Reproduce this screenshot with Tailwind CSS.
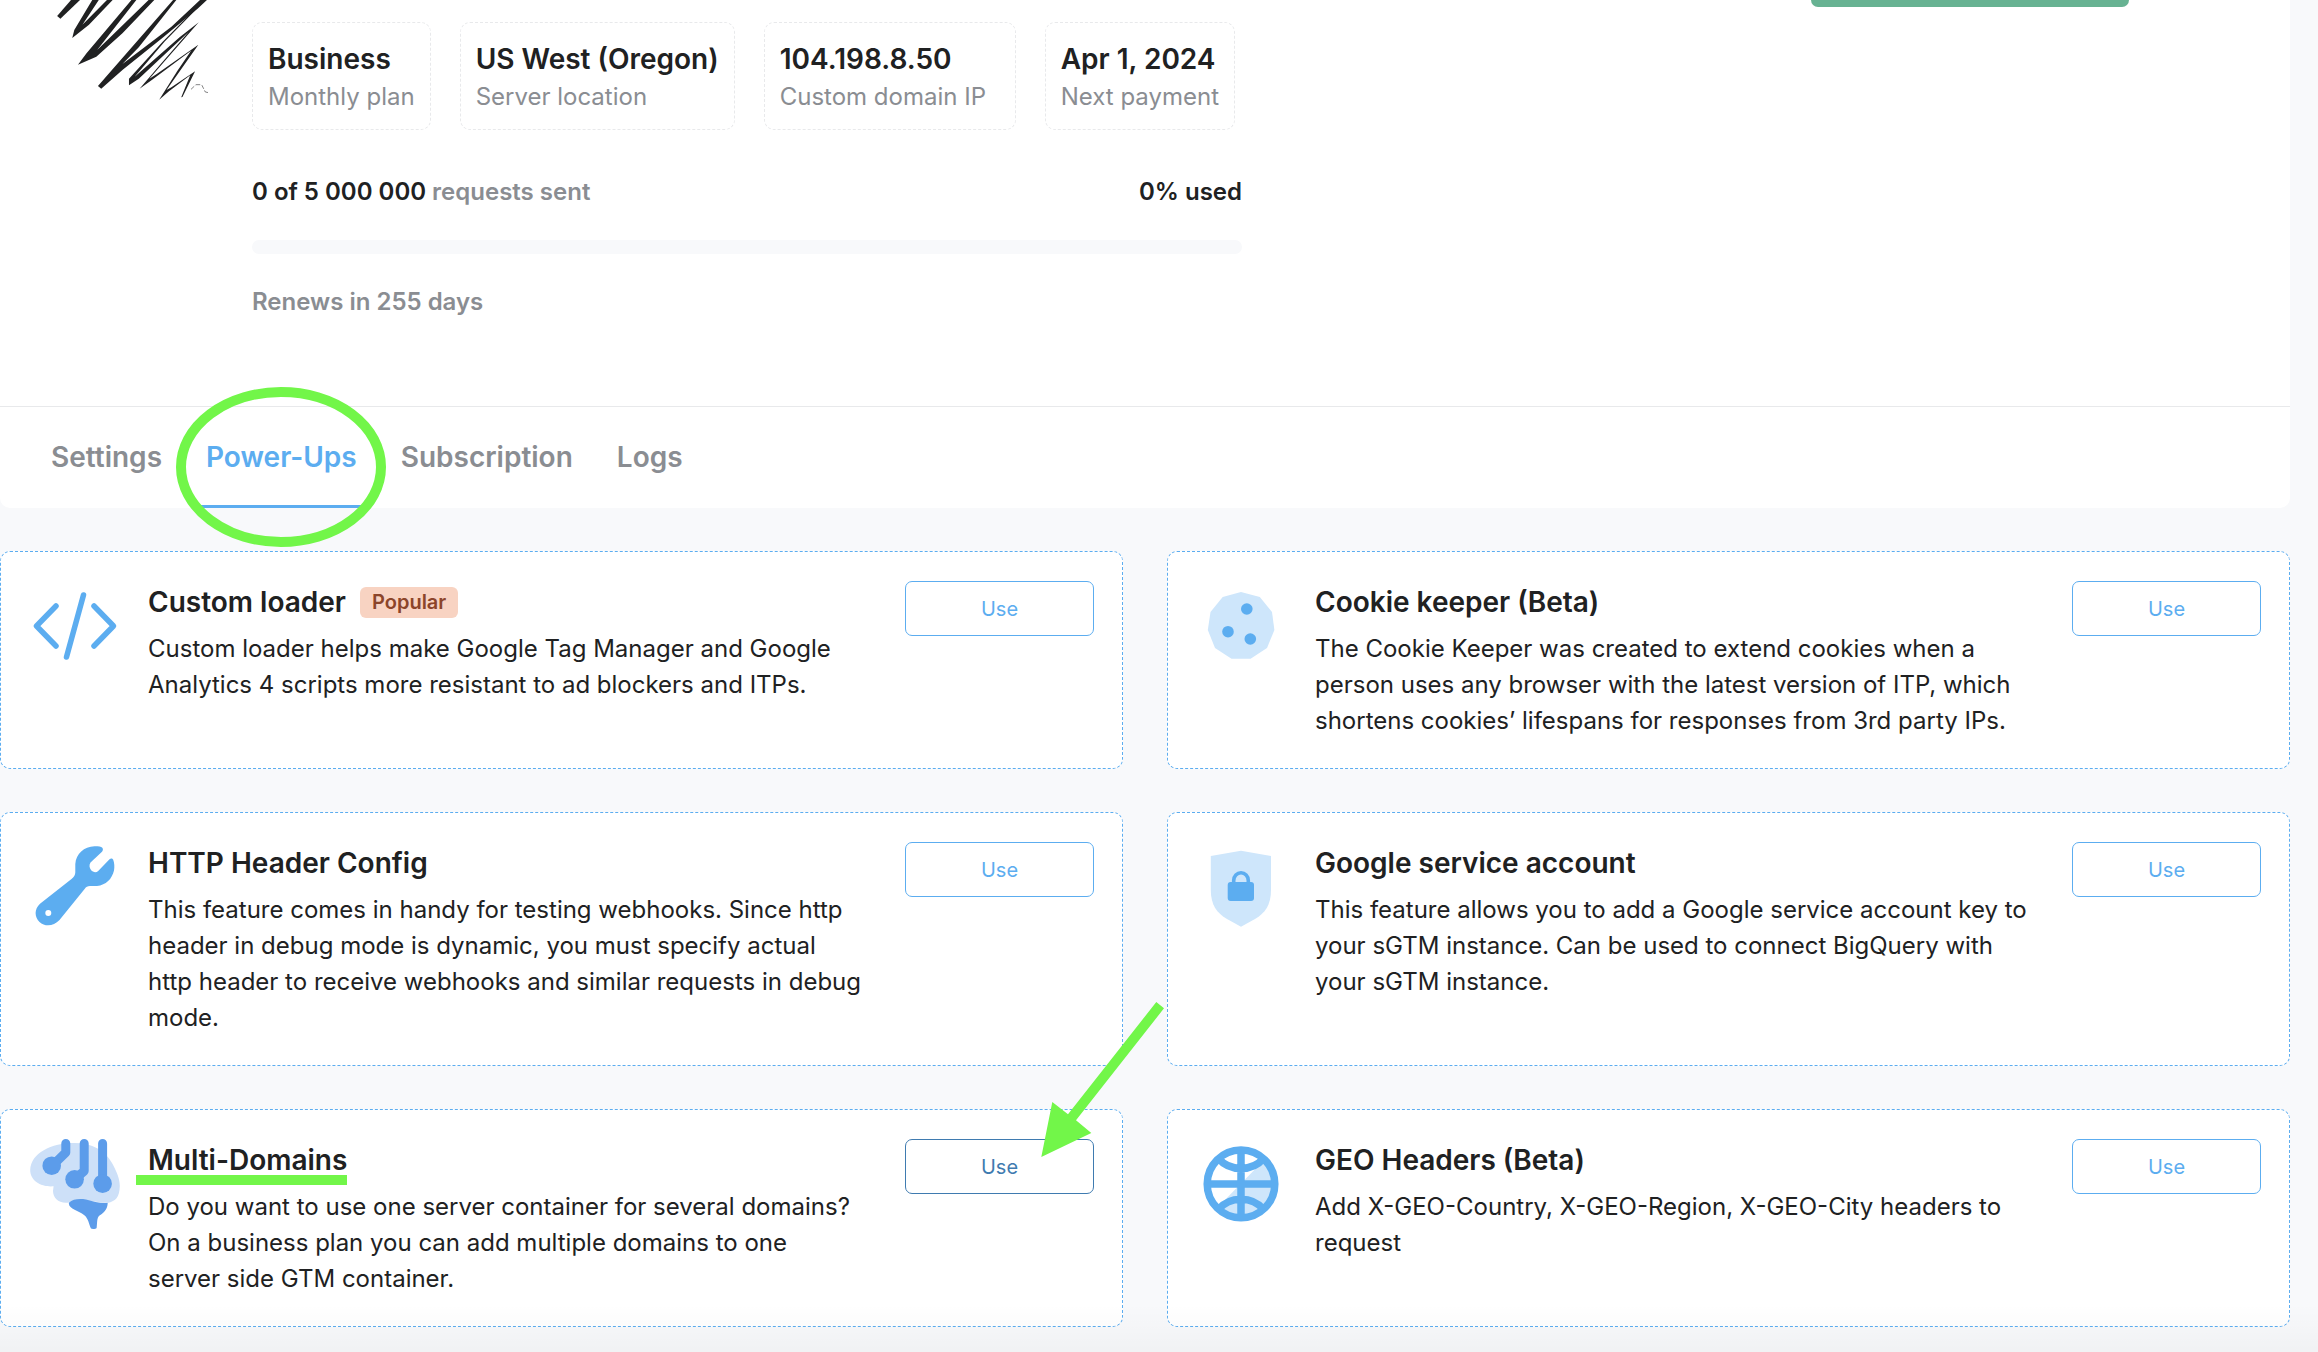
<!DOCTYPE html>
<html lang="en">
<head>
<meta charset="utf-8">
<meta name="viewport" content="width=device-width, initial-scale=1">
<title>Container power-ups</title>
<script src="https://cdn.jsdelivr.net/npm/@tailwindcss/browser@4"></script>
</head>
<body class="bg-[#f8f9fb] font-[Inter,sans-serif] text-[#202122]">
<div class="relative min-h-screen overflow-hidden pr-7">

  <header class="rounded-b-[10px] bg-white">
    <div class="flex items-start">
      <div class="w-[252px] shrink-0">
        <!-- Container avatar: pen scribble -->
        <svg class="h-[100px] w-60" viewBox="0 0 588 300" preserveAspectRatio="none" fill="#202122" aria-hidden="true">
          <path d="M174 0H196L148 56L140 48Z"/>
          <path d="M226 0H242L202 74L262 0H276L218 74L177 114L182 90Z"/>
          <path d="M322 0H334L238 150L364 0H378L300 100L236 170L191 194L212 160Z"/>
          <path d="M424 0H432L340 142L300 192L420 80L490 0H507L486 24L400 112L300 210L248 266L240 258Z"/>
          <path fill-rule="evenodd" d="M482 22L398 126L316 236V256L340 236L462 96L398 186L342 266L372 240L468 152L434 214L390 299L414 274L466 226L444 292L447 291L478 214L420 262L408 270L486 134L384 222L366 236L400 188L487 67L440 112L330 230L404 124L484 24Z"/>
          <path d="M468 268L480 254H494L503 276L511 278" fill="none" stroke="#202122" stroke-width="1.5" stroke-dasharray="12 5"/>
        </svg>
      </div>
      <div class="w-[990px] pt-[22px]">
        <dl class="flex gap-[29px]">
          <div class="flex h-[108px] flex-col rounded-[10px] border border-dashed border-[#e8e9eb] px-[15px] pt-[17px]">
            <dt class="order-2 text-2xl leading-[38px] text-[#8a8d92]">Monthly plan</dt>
            <dd class="text-[28px] leading-[38px] font-semibold">Business</dd>
          </div>
          <div class="flex h-[108px] flex-col rounded-[10px] border border-dashed border-[#e8e9eb] px-[15px] pt-[17px]">
            <dt class="order-2 text-2xl leading-[38px] text-[#8a8d92]">Server location</dt>
            <dd class="text-[28px] leading-[38px] font-semibold">US West (Oregon)</dd>
          </div>
          <div class="flex h-[108px] w-[252px] flex-col rounded-[10px] border border-dashed border-[#e8e9eb] px-[15px] pt-[17px]">
            <dt class="order-2 text-2xl leading-[38px] text-[#8a8d92]">Custom domain IP</dt>
            <dd class="text-[28px] leading-[38px] font-semibold">104.198.8.50</dd>
          </div>
          <div class="flex h-[108px] flex-col rounded-[10px] border border-dashed border-[#e8e9eb] px-[15px] pt-[17px]">
            <dt class="order-2 text-2xl leading-[38px] text-[#8a8d92]">Next payment</dt>
            <dd class="text-[28px] leading-[38px] font-semibold">Apr 1, 2024</dd>
          </div>
        </dl>
        <div class="mt-11 flex justify-between text-2xl leading-9 font-semibold">
          <p>0 of 5 000 000 <span class="text-[#8a8d92]">requests sent</span></p>
          <p>0% used</p>
        </div>
        <div class="mt-[30px] h-3.5 rounded-full bg-[#f8f9fb]" role="progressbar" aria-valuenow="0" aria-valuemin="0" aria-valuemax="100" aria-label="Requests used"></div>
        <p class="mt-[30px] text-2xl leading-9 font-semibold text-[#8a8d92]">Renews in 255 days</p>
      </div>
      <button type="button" aria-label="Container action" class="mr-[161px] ml-auto h-[7px] w-[318px] rounded-b-[10px] bg-[#67b292]"></button>
    </div>

    <nav class="mt-[86px] flex h-[102px] gap-7 border-t border-[#e8e9eb] px-[43px] text-[28px] leading-[38px] font-semibold text-[#8a8d92]" aria-label="Container sections">
      <a href="#settings" class="px-2 pt-[31px]">Settings</a>
      <a href="#power-ups" class="relative border-b-3 border-[#5cadf0] px-2 pt-[31px] text-[#5cadf0]" aria-current="page">Power-Ups
        <svg class="absolute -top-5 left-1/2 h-40 w-[210px] -translate-x-1/2" viewBox="0 0 210 160" fill="none" stroke="#72f649" stroke-width="10" aria-hidden="true"><ellipse cx="105" cy="80" rx="100" ry="75"/></svg>
      </a>
      <a href="#subscription" class="px-2 pt-[31px]">Subscription</a>
      <a href="#logs" class="px-2 pt-[31px]">Logs</a>
    </nav>
  </header>

  <main class="mt-[43px] grid grid-cols-2 gap-x-11 gap-y-[43px]">

    <article class="flex rounded-[10px] border border-dashed border-[#5cadf0] bg-white py-[29px] pr-7 pl-[29px]">
      <svg class="size-[90px] shrink-0" viewBox="0 0 90 90" fill="none" stroke="#5cadf0" stroke-width="5.5" stroke-linecap="round" stroke-linejoin="round" aria-hidden="true"><path d="M26 25 6.500 45 26 65M64 25 83.500 45 64 65M53.500 14 36.500 76"/></svg>
      <div class="ml-7 min-w-0 flex-1">
        <div class="flex items-center gap-3.5">
          <h2 class="text-[28px] leading-[42px] font-semibold">Custom loader</h2>
          <span class="rounded-md bg-[#f8d3c2] px-3 text-xl leading-[31px] font-semibold text-[#8c452a]">Popular</span>
        </div>
        <p class="mt-2 max-w-[713px] text-2xl leading-9">Custom loader helps make Google Tag Manager and Google Analytics 4 scripts more resistant to ad blockers and ITPs.</p>
      </div>
      <button type="button" class="h-[55px] w-[189px] shrink-0 rounded-[7px] border border-[#5cadf0] text-xl text-[#5cadf0]">Use</button>
    </article>

    <article class="flex rounded-[10px] border border-dashed border-[#5cadf0] bg-white py-[29px] pr-7 pl-[29px]">
      <svg class="size-[90px] shrink-0" viewBox="0 0 90 90" aria-hidden="true"><path fill="#cee6fb" d="M44 11 62.800 16 75 31 77.400 49 70 67 53.600 77.700H34.500L18 67 10.800 49 13.500 31 25.700 16Z"/><g fill="#5cadf0"><circle cx="49.800" cy="28" r="5.800"/><circle cx="31" cy="50.700" r="5.800"/><circle cx="53.300" cy="58" r="5.800"/></g></svg>
      <div class="ml-7 min-w-0 flex-1">
        <h2 class="text-[28px] leading-[42px] font-semibold">Cookie keeper (Beta)</h2>
        <p class="mt-2 max-w-[713px] text-2xl leading-9">The Cookie Keeper was created to extend cookies when a person uses any browser with the latest version of ITP, which shortens cookies’ lifespans for responses from 3rd party IPs.</p>
      </div>
      <button type="button" class="h-[55px] w-[189px] shrink-0 rounded-[7px] border border-[#5cadf0] text-xl text-[#5cadf0]">Use</button>
    </article>

    <article class="flex rounded-[10px] border border-dashed border-[#5cadf0] bg-white py-[29px] pr-7 pl-[29px]">
      <svg class="size-[90px] shrink-0" viewBox="0 0 90 90" aria-hidden="true"><path fill="#5cadf0" fill-rule="evenodd" d="M64.500 4.300C69 4.300 71 4.700 72.300 5.800C73.300 7 73 8.500 72 9.700L60.500 20.500C58.800 23 59.500 26 61 28C63 30.300 66 31 68.200 29L79.500 17.300C80.800 16 82.300 16 83.200 17.800C84.400 21 84.700 25 84 28.500C82 37 76 43 67 44H60C57.500 44 56 45 54.800 46.800L29.500 78C23.500 84.500 15 85 9.500 80C4.500 75 4 67.500 10 61.800L41.500 37C44 35 45.200 33 45.300 30.500V22C46 12 54 4.500 64.500 4.300ZM18.300 68A3 3 0 1 0 18.300 74A3 3 0 1 0 18.300 68Z"/></svg>
      <div class="ml-7 min-w-0 flex-1">
        <h2 class="text-[28px] leading-[42px] font-semibold">HTTP Header Config</h2>
        <p class="mt-2 max-w-[713px] text-2xl leading-9">This feature comes in handy for testing webhooks. Since http header in debug mode is dynamic, you must specify actual http header to receive webhooks and similar requests in debug mode.</p>
      </div>
      <button type="button" class="h-[55px] w-[189px] shrink-0 rounded-[7px] border border-[#5cadf0] text-xl text-[#5cadf0]">Use</button>
    </article>

    <article class="flex rounded-[10px] border border-dashed border-[#5cadf0] bg-white py-[29px] pr-7 pl-[29px]">
      <svg class="size-[90px] shrink-0" viewBox="0 0 90 90" aria-hidden="true"><path fill="#cee6fb" d="M44 8.700 74 14V48C74 63 68 71 58 77L44 84.700 30 77C20 71 13.800 63 13.800 48V14Z"/><rect x="30.700" y="40" width="26.300" height="19" rx="3" fill="#5cadf0"/><path d="M36.700 42V38.500A7.300 7.700 0 0 1 51.300 38.500V42" fill="none" stroke="#5cadf0" stroke-width="3.600"/></svg>
      <div class="ml-7 min-w-0 flex-1">
        <h2 class="text-[28px] leading-[42px] font-semibold">Google service account</h2>
        <p class="mt-2 max-w-[713px] text-2xl leading-9">This feature allows you to add a Google service account key to your sGTM instance. Can be used to connect BigQuery with your sGTM instance.</p>
      </div>
      <button type="button" class="h-[55px] w-[189px] shrink-0 rounded-[7px] border border-[#5cadf0] text-xl text-[#5cadf0]">Use</button>
    </article>

    <article class="relative flex rounded-[10px] border border-dashed border-[#5cadf0] bg-white py-[29px] pr-7 pl-[29px]">
      <svg class="size-[90px] shrink-0" viewBox="0 0 90 90" aria-hidden="true"><path fill="#cde0f8" d="M0.200 31C1 14 21 4 44.600 4C62 4 75 11 82 24C87 33 89.800 40 89.800 47C89.500 58 86 62 77.500 64L50 61 38.900 63.500C29 65 23 59 23 52L23.600 47.300C12 48.500 0 42 0.200 31Z"/><g fill="none" stroke="#5c9cea" stroke-width="9" stroke-linejoin="round" stroke-linecap="round"><path d="M35.800 4.500V13.500L22 27M54.200 4.500V32L45 40M72.600 4.500V44"/></g><g fill="#5c9cea"><circle cx="21.700" cy="26.700" r="9.300"/><circle cx="44.600" cy="40.300" r="9.300"/><circle cx="72.600" cy="44.700" r="9.300"/><path d="M38.900 63.700C43 60 49 59.500 56 60.500C63 62.500 70 64.500 77.700 64C77.500 70 74 74 69.500 76.500C66.500 79 67.500 84 66.600 89C66 90 62 90.300 61 89.500C59 86 58.500 79 54 76C49 71.500 38 70 38.900 63.700Z"/></g></svg>
      <div class="ml-7 min-w-0 flex-1">
        <h2 class="relative w-fit text-[28px] leading-[42px] font-semibold">Multi-Domains
          <span class="absolute right-0 -bottom-1 -left-3 h-2.5 bg-[#72f649]" aria-hidden="true"></span>
        </h2>
        <p class="mt-2 max-w-[713px] text-2xl leading-9">Do you want to use one server container for several domains? On a business plan you can add multiple domains to one server side GTM container.</p>
      </div>
      <button type="button" class="h-[55px] w-[189px] shrink-0 rounded-[7px] border border-[#3f7bb0] text-xl text-[#3f7bb0]">Use</button>
      <!-- Annotation arrow pointing at the button -->
      <svg class="pointer-events-none absolute -top-[109px] -right-[43px] z-10 h-[156px] w-[124px]" viewBox="0 0 124 156" fill="#72f649" aria-hidden="true"><path d="M115.300 1 123 7.300 35 119.300 50.300 132 0.300 156 11.300 101 27 113.300Z"/></svg>
    </article>

    <article class="flex rounded-[10px] border border-dashed border-[#5cadf0] bg-white py-[29px] pr-7 pl-[29px]">
      <svg class="size-[90px] shrink-0" viewBox="0 0 90 90" aria-hidden="true"><path fill="#cee6fb" d="M68 20A34 34 0 1 1 20 69Z"/><g fill="none" stroke="#5cadf0" stroke-width="7.500"><circle cx="44" cy="44.900" r="33.800"/><path d="M44 10V80M10 44.900H78M21 19Q30 29.500 44 29.500T67 19M21 70.800Q30 60.300 44 60.300T67 70.800"/></g></svg>
      <div class="ml-7 min-w-0 flex-1">
        <h2 class="text-[28px] leading-[42px] font-semibold">GEO Headers (Beta)</h2>
        <p class="mt-2 max-w-[713px] text-2xl leading-9">Add X-GEO-Country, X-GEO-Region, X-GEO-City headers to request</p>
      </div>
      <button type="button" class="h-[55px] w-[189px] shrink-0 rounded-[7px] border border-[#5cadf0] text-xl text-[#5cadf0]">Use</button>
    </article>
  </main>

  <div class="pointer-events-none absolute inset-x-0 bottom-0 h-12 bg-linear-to-b from-black/0 to-black/3" aria-hidden="true"></div>
</div>
</body>
</html>
